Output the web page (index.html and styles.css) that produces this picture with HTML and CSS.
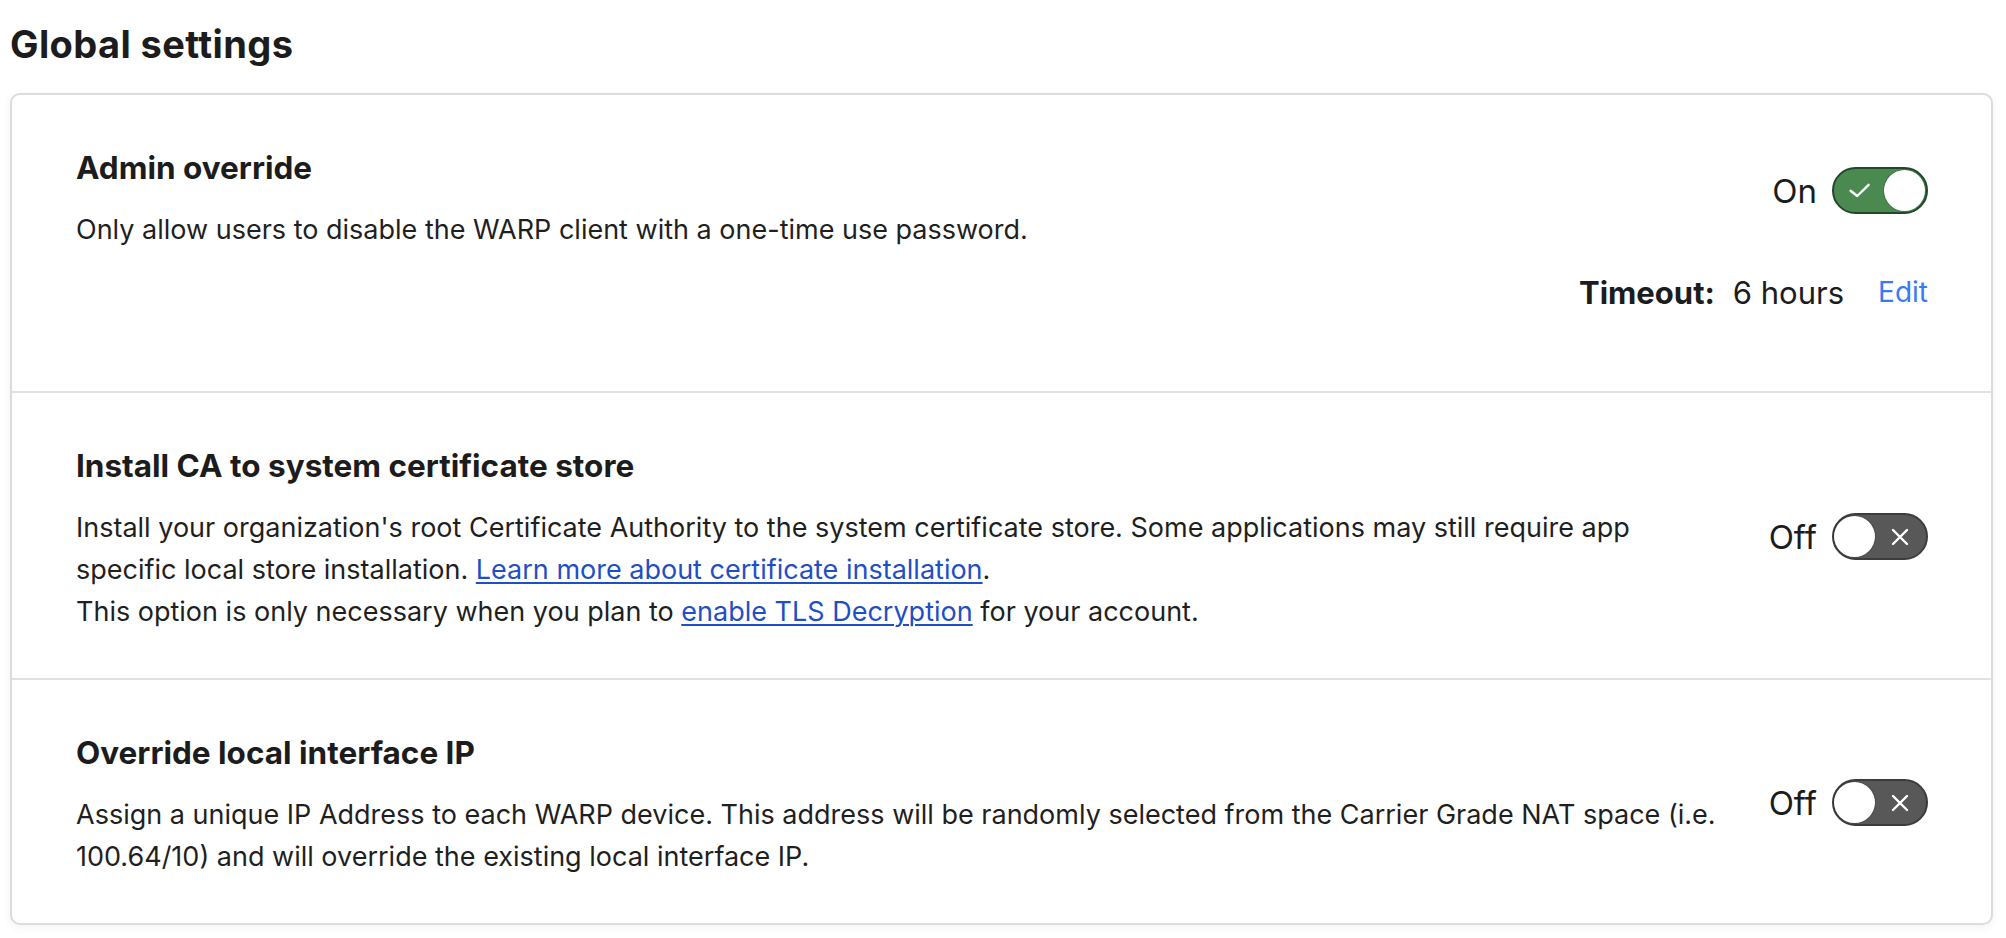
FILE: index.html
```html
<!DOCTYPE html>
<html lang="en">
<head>
<meta charset="utf-8">
<title>Global settings</title>
<link rel="stylesheet" href="styles.css">
</head>
<body>
  <h1 class="page-title">Global settings</h1>
  <section class="card">
    <div class="row row-admin">
      <div class="info">
        <h2 class="row-title">Admin override</h2>
        <p class="row-desc">Only allow users to disable the WARP client with a one-time use password.</p>
      </div>
      <div class="controls">
        <div class="switch-group">
          <span class="switch-label">On</span>
          <span class="switch switch-on">
            <svg class="switch-icon icon-check" width="21" height="15" viewBox="0 0 21 15"><path d="M1.6 7.8 L8.2 13 L19.6 1.8" fill="none" stroke="#fff" stroke-width="2.4" stroke-linecap="round" stroke-linejoin="round"/></svg>
            <span class="knob"></span>
          </span>
        </div>
        <div class="timeout">
          <span class="timeout-label">Timeout:</span>
          <span class="timeout-value">6 hours</span>
          <a class="edit-link" href="#">Edit</a>
        </div>
      </div>
    </div>

    <div class="row row-split">
      <div class="info">
        <h2 class="row-title">Install CA to system certificate store</h2>
        <p class="row-desc">Install your organization's root Certificate Authority to the system certificate store. Some applications may still require app specific local store installation. <a class="text-link" href="#">Learn more about certificate installation</a>.<br>This option is only necessary when you plan to <a class="text-link" href="#">enable TLS Decryption</a> for your account.</p>
      </div>
      <div class="switch-group switch-group-centered">
        <span class="switch-label">Off</span>
        <span class="switch switch-off">
          <span class="knob"></span>
          <svg class="switch-icon icon-x" width="18" height="18" viewBox="0 0 18 18"><path d="M2 2 L16 16 M16 2 L2 16" fill="none" stroke="#fff" stroke-width="2.4" stroke-linecap="round"/></svg>
        </span>
      </div>
    </div>

    <div class="row row-split">
      <div class="info">
        <h2 class="row-title">Override local interface IP</h2>
        <p class="row-desc">Assign a unique IP Address to each WARP device. This address will be randomly selected from the Carrier Grade NAT space (i.e. 100.64/10) and will override the existing local interface IP.</p>
      </div>
      <div class="switch-group switch-group-centered">
        <span class="switch-label">Off</span>
        <span class="switch switch-off">
          <span class="knob"></span>
          <svg class="switch-icon icon-x" width="18" height="18" viewBox="0 0 18 18"><path d="M2 2 L16 16 M16 2 L2 16" fill="none" stroke="#fff" stroke-width="2.4" stroke-linecap="round"/></svg>
        </span>
      </div>
    </div>
  </section>
</body>
</html>
```
FILE: styles.css
```css
html, body {
  background: #ffffff;
}

body {
  margin: 0;
  padding: 0 13px 20px 10px;
  font-family: Inter, "Noto Sans", "Liberation Sans", sans-serif;
  color: #1d1d1f;
}

.page-title {
  margin: 0 0 27px 0;
  padding-top: 22px;
  font-size: 38px;
  line-height: 44px;
  font-weight: 700;
  letter-spacing: 0.4px;
  color: #1c1c1c;
}

.card {
  background: #fff;
  border: 2px solid #dcdcdc;
  border-radius: 10px;
  box-shadow: 0 2px 10px rgba(0, 0, 0, 0.06);
}

.row {
  display: flex;
  padding: 53px 63px 45px 64px;
}

.row + .row {
  border-top: 2px solid #e1e1e1;
}

.row-admin {
  align-items: flex-start;
  padding-bottom: 79px;
}

.row-split {
  align-items: center;
}

.info {
  flex: 1;
  min-width: 0;
}

.row-title {
  margin: 0 0 21px 0;
  font-size: 31.5px;
  line-height: 40px;
  font-weight: 700;
  color: #1c1c1c;
}

.row-desc {
  margin: 0;
  font-size: 27px;
  line-height: 42px;
  font-weight: 400;
  color: #1f1f1f;
}

.text-link {
  color: #1f4fc4;
  text-decoration: underline;
  text-underline-offset: 3px;
  text-decoration-thickness: 1.5px;
}

.controls {
  display: flex;
  flex-direction: column;
  align-items: flex-end;
  margin-top: 19px;
  gap: 58px;
}

.switch-group {
  display: flex;
  align-items: center;
  gap: 15px;
}

.switch-group-centered {
  margin-left: 44px;
  margin-bottom: 6px;
}

.switch-label {
  font-size: 33px;
  line-height: 40px;
  color: #1c1c1c;
}

.switch {
  box-sizing: border-box;
  width: 96px;
  height: 47px;
  border-radius: 24px;
  border: 2px solid;
  display: flex;
  align-items: center;
  justify-content: space-between;
}

.switch-on {
  background: #4a8a51;
  border-color: #21482a;
  padding: 0 1px 0 15px;
}

.switch-off {
  background: #585858;
  border-color: #3c3c3c;
  padding: 0 17px 0 0;
}

.knob {
  width: 41px;
  height: 41px;
  border-radius: 50%;
  background: #fff;
  box-shadow: 0 0 0 1px rgba(0, 0, 0, 0.15);
}

.switch-icon {
  display: block;
}

.timeout {
  display: flex;
  align-items: center;
  height: 40px;
}

.timeout-label {
  font-size: 31px;
  font-weight: 700;
  color: #1c1c1c;
}

.timeout-value {
  margin-left: 18px;
  font-size: 31px;
  color: #1c1c1c;
}

.edit-link {
  margin-left: 34px;
  font-size: 28px;
  color: #3a7af0;
  text-decoration: none;
}
```
